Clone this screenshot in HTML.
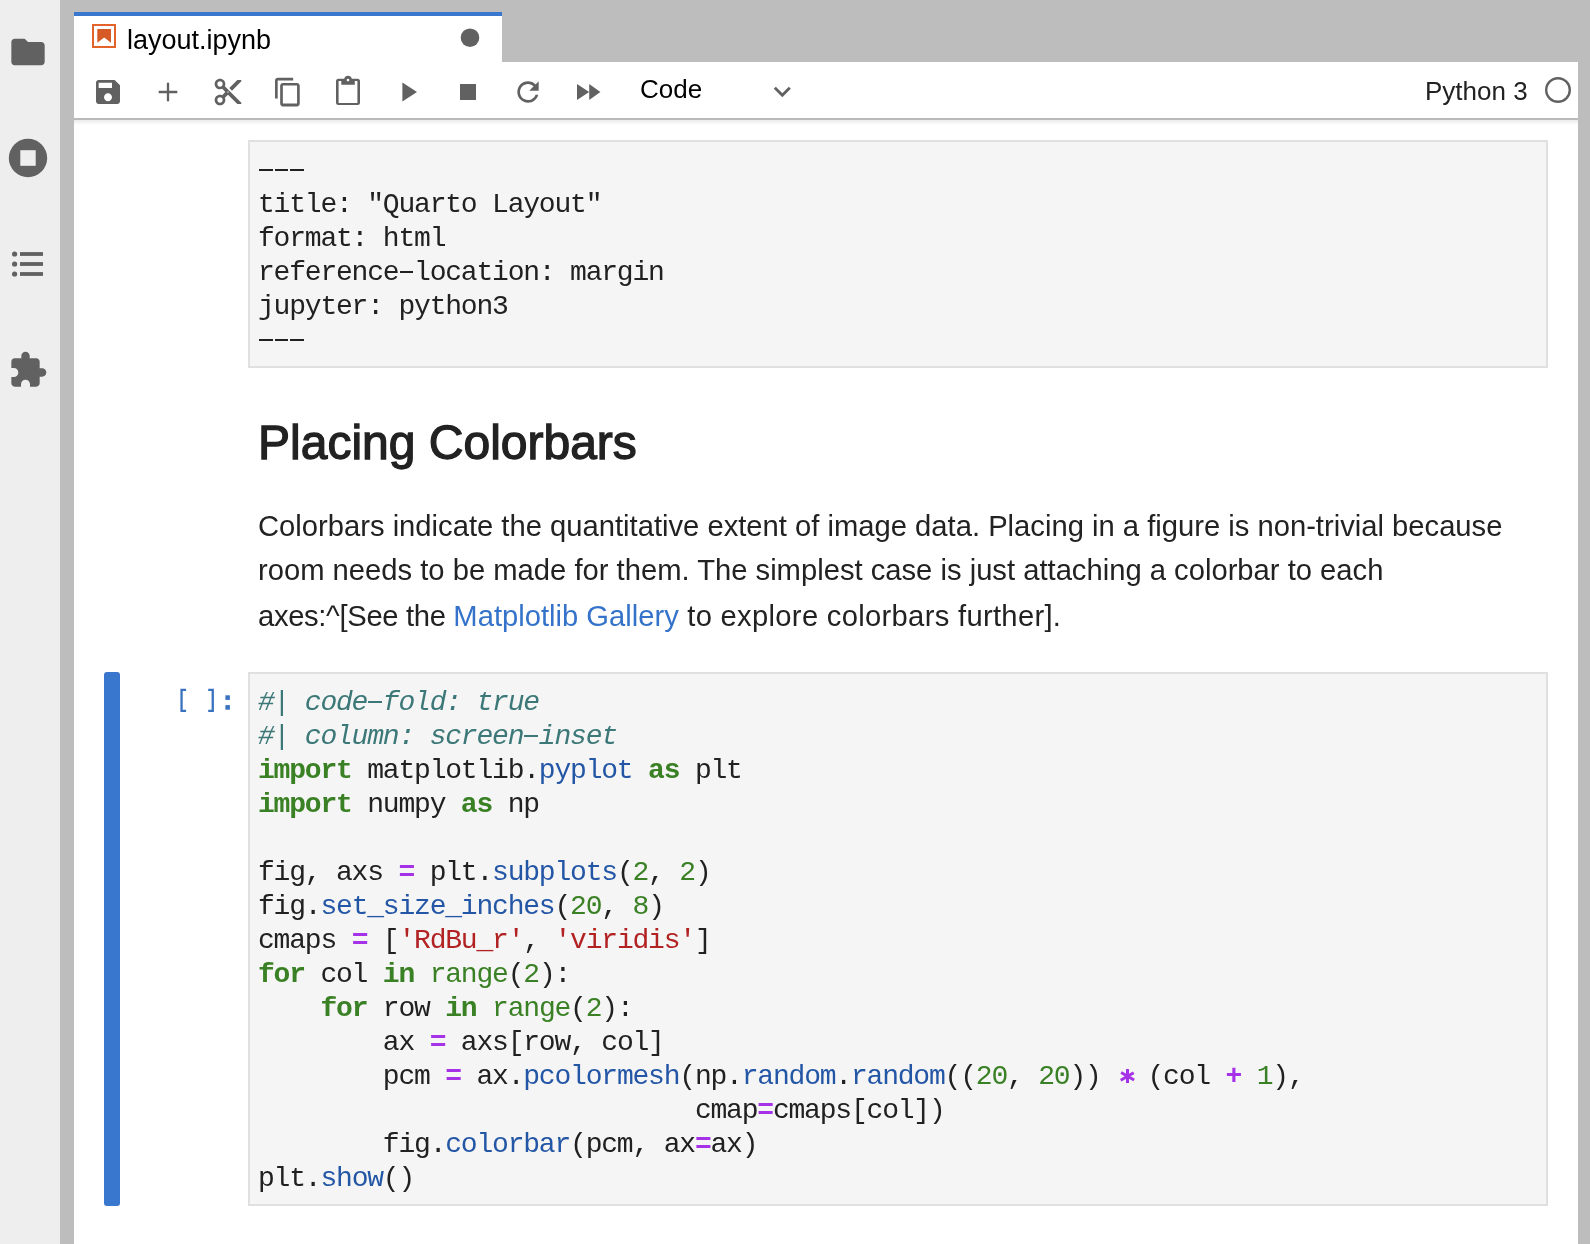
<!DOCTYPE html>
<html><head><meta charset="utf-8">
<style>
*{margin:0;padding:0;box-sizing:border-box}
html,body{width:1590px;height:1244px;overflow:hidden;background:#bdbdbd;font-family:"Liberation Sans",sans-serif;position:relative}
.abs{position:absolute}
body>div{will-change:transform}
#side{left:0;top:0;width:60px;height:1244px;background:#eeeeee}
#main{left:74px;top:62px;width:1504px;height:1182px;background:#fff}
#tab{left:74px;top:12px;width:428px;height:50px;background:#fff;border-top:4px solid #3877cd}
#toolbar{left:74px;top:62px;width:1504px;height:58px;background:#fff;border-bottom:2px solid #bababa}
#tshadow{left:74px;top:120px;width:1504px;height:5px;background:linear-gradient(rgba(0,0,0,0.08),rgba(0,0,0,0))}
.mono{font-family:"Liberation Mono",monospace;font-size:28px;letter-spacing:-1.2px;line-height:34px;white-space:pre;color:#212121}
.cell{background:#f5f5f5;border:2px solid #e0e0e0}
.cm{color:#3d7878;font-style:italic}
.kw{color:#3a8024;font-weight:bold}
.op{color:#a532e6;font-weight:bold}
.fn{color:#2456a6}
.nu{color:#3a8024}
.st{color:#b22222}
.hy{display:inline-block;width:15.6px;height:34px;vertical-align:top;position:relative;letter-spacing:0}
.hy::after{content:"";position:absolute;left:1.2px;width:13.4px;top:14.6px;height:2.6px;background:currentColor}
.ast{display:inline-block;width:15.6px;height:34px;vertical-align:top;position:relative;letter-spacing:0}
.ast i{position:absolute;left:10.2px;top:8.75px;width:2.6px;height:14.5px;background:#a532e6;transform-origin:50% 50%}
.ast i:nth-child(2){transform:rotate(60deg)}
.ast i:nth-child(3){transform:rotate(-60deg)}
svg{position:absolute;left:0;top:0}
</style></head><body>
<div id="side" class="abs"></div>
<div id="main" class="abs"></div>
<div id="tab" class="abs"></div>
<div id="toolbar" class="abs"></div>
<div id="tshadow" class="abs"></div>

<div class="abs" style="left:127px;top:23px;font-size:27px;line-height:34px;color:#000">layout.ipynb</div>
<div class="abs" style="left:640px;top:72px;font-size:26px;line-height:34px;color:#000">Code</div>
<div class="abs" style="left:1425px;top:74px;font-size:26px;line-height:34px;color:#222">Python 3</div>

<svg width="1590" height="1244" viewBox="0 0 1590 1244">
 <g fill="#616161">
  <!-- sidebar -->
  <g transform="translate(8,32) scale(1.6667)"><path d="M10 4H4c-1.1 0-1.99.9-1.99 2L2 18c0 1.1.9 2 2 2h16c1.1 0 2-.9 2-2V8c0-1.1-.9-2-2-2h-8l-2-2z"/></g>
  <circle cx="28" cy="158" r="19.2"/>
  <rect x="20.3" y="150.2" width="15.4" height="15.6" fill="#eeeeee"/>
  <circle cx="14.6" cy="254" r="2.6"/><circle cx="14.6" cy="264" r="2.6"/><circle cx="14.6" cy="274" r="2.6"/><rect x="20" y="252.1" width="23" height="3.8"/><rect x="20" y="262.1" width="23" height="3.8"/><rect x="20" y="272.1" width="23" height="3.8"/>
  <g transform="translate(8,350) scale(1.6667)"><path d="M20.5 11H19V7c0-1.1-.9-2-2-2h-4V3.5C13 2.12 11.880 1 10.5 1S8 2.12 8 3.5V5H4c-1.1 0-1.99.9-1.99 2v3.8H3.5c1.49 0 2.7 1.21 2.7 2.7s-1.21 2.7-2.7 2.7H2V20c0 1.1.9 2 2 2h3.8v-1.5c0-1.49 1.21-2.7 2.7-2.7 1.49 0 2.7 1.21 2.7 2.7V22H17c1.1 0 2-.9 2-2v-4h1.5c1.38 0 2.5-1.12 2.5-2.5S21.88 11 20.5 11z"/></g>
  <!-- toolbar -->
  <g transform="translate(92,76) scale(1.3333)"><path d="M17 3H5c-1.11 0-2 .9-2 2v14c0 1.1.89 2 2 2h14c1.1 0 2-.9 2-2V7l-4-4zm-5 16c-1.66 0-3-1.34-3-3s1.34-3 3-3 3 1.34 3 3-1.34 3-3 3zm3-10H5V5h10v4z"/></g>
  <g transform="translate(152,76) scale(1.3333)"><path d="M19 12.87h-6.13v6.13h-1.74v-6.13H5v-1.74h6.13V5h1.74v6.13H19z"/></g>
  <g transform="translate(212,76) scale(1.3333)"><path d="M9.64 7.64c.23-.5.36-1.05.36-1.64 0-2.21-1.79-4-4-4S2 3.790 2 6s1.79 4 4 4c.59 0 1.14-.13 1.64-.36L10 12l-2.36 2.36C7.14 14.13 6.59 14 6 14c-2.21 0-4 1.79-4 4s1.79 4 4 4 4-1.79 4-4c0-.59-.13-1.14-.36-1.64L12 14l7 7h3v-1L9.64 7.64zM6 8c-1.1 0-2-.89-2-2s.9-2 2-2 2 .89 2 2-.9 2-2 2zm0 12c-1.1 0-2-.89-2-2s.9-2 2-2 2 .89 2 2-.9 2-2 2zm6-7.5c-.28 0-.5-.22-.5-.5s.22-.5.5-.5.5.22.5.5-.22.5-.5.5zM19 3l-6 6 2 2 7-7V3z"/></g>
  <g transform="translate(272,76) scale(1.7778)"><path d="M11.9,1H3.2C2.4,1,1.7,1.7,1.7,2.5v10.2h1.5V2.5h8.7V1z M14.1,3.9h-8c-0.8,0-1.5,0.7-1.5,1.5v10.2c0,0.8,0.7,1.5,1.5,1.5h8 c0.8,0,1.5-0.7,1.5-1.5V5.4C15.5,4.6,14.9,3.9,14.1,3.9z M14.1,15.5h-8V5.4h8V15.5z"/></g>
  <path d="M336 81.3a2.5 2.5 0 0 1 2.5-2.5h5.7a3.9 3.9 0 0 1 7.6 0h5.7a2.5 2.5 0 0 1 2.5 2.5v21.1a2.5 2.5 0 0 1-2.5 2.5h-19a2.5 2.5 0 0 1-2.5-2.5zM338.6 81.1v21.8h18.8v-21.8h-2.6v3.7h-13.5v-3.7zM348 78.7a1.3 1.3 0 1 0 0.001 0z" fill-rule="evenodd"/>
  <path d="M402.4 82.6L417 92L402.4 101.4z"/>
  <rect x="460" y="84" width="16" height="16"/>
  <g transform="translate(512,76) scale(1.3333)"><path d="M17.65 6.35C16.2 4.9 14.21 4 12 4c-4.42 0-7.99 3.58-7.99 8s3.57 8 7.99 8c3.73 0 6.84-2.55 7.73-6h-2.08c-.82 2.33-3.04 4-5.65 4-3.310 0-6-2.69-6-6s2.69-6 6-6c1.66 0 3.14.69 4.22 1.78L13 11h7V4l-2.35 2.35z"/></g>
  <path d="M577 84L589.2 92L577 100zM589.2 84L600.4 92L589.2 100z"/>
  <circle cx="470" cy="37.7" r="9.3"/>
 </g>
 <path d="M774.8 87.8L782.3 95.2L789.8 87.8" fill="none" stroke="#616161" stroke-width="2.9"/>
 <circle cx="1558" cy="90" r="11.8" fill="none" stroke="#616161" stroke-width="2.4"/>
 <!-- notebook icon -->
 <rect x="93" y="25" width="22" height="22" fill="none" stroke="#e3632b" stroke-width="2"/>
 <path d="M97.3 29H111V42.8L104.2 37.5L97.3 42.8z" fill="#d55a25"/>
</svg>

<div class="abs cell" style="left:248px;top:140px;width:1300px;height:228px"></div>
<div class="abs mono" style="left:258px;top:154px"><span class="hy"></span><span class="hy"></span><span class="hy"></span>
title: "Quarto Layout"
format: html
reference<span class="hy"></span>location: margin
jupyter: python3
<span class="hy"></span><span class="hy"></span><span class="hy"></span></div>

<div class="abs" style="left:258px;top:413px;font-size:48px;line-height:60px;color:#222;-webkit-text-stroke:1.3px #222;letter-spacing:0px">Placing Colorbars</div>
<div class="abs" style="left:258px;top:504px;font-size:29.2px;line-height:44px;color:#222;width:1320px;white-space:nowrap">Colorbars indicate the quantitative extent of image data. Placing in a figure is non-trivial because<br>room needs to be made for them. The simplest case is just attaching a colorbar to each</div>
<div class="abs" style="left:258px;top:594px;font-size:29.2px;line-height:44px;color:#222;white-space:nowrap"><span style="letter-spacing:-0.33px">axes:^[See the </span><span style="color:#3473c9">Matplotlib Gallery</span><span style="letter-spacing:0.3px"> to explore colorbars further].</span></div>

<div class="abs" style="left:104px;top:672px;width:16px;height:534px;background:#3877cd;border-radius:3px"></div>
<svg width="1590" height="1244" viewBox="0 0 1590 1244"><g fill="#3a72c0"><path d="M180.4 688.7h5.7v2.3h-3.4v18.7h3.4v2.3h-5.7zM213.9 688.7h-5.7v2.3h3.4v18.7h-3.4v2.3h5.7z"/><rect x="225.4" y="695.3" width="4.5" height="4.6"/><rect x="225.4" y="705.1" width="4.5" height="4.6"/></g></svg>
<div class="abs cell" style="left:248px;top:672px;width:1300px;height:534px"></div>
<div class="abs mono" style="left:258px;top:686px"><span class="cm">#| code<span class="hy"></span>fold: true</span>
<span class="cm">#| column: screen<span class="hy"></span>inset</span>
<span class="kw">import</span> matplotlib.<span class="fn">pyplot</span> <span class="kw">as</span> plt
<span class="kw">import</span> numpy <span class="kw">as</span> np

fig, axs <span class="op">=</span> plt.<span class="fn">subplots</span>(<span class="nu">2</span>, <span class="nu">2</span>)
fig.<span class="fn">set_size_inches</span>(<span class="nu">20</span>, <span class="nu">8</span>)
cmaps <span class="op">=</span> [<span class="st">'RdBu_r'</span>, <span class="st">'viridis'</span>]
<span class="kw">for</span> col <span class="kw">in</span> <span class="nu">range</span>(<span class="nu">2</span>):
    <span class="kw">for</span> row <span class="kw">in</span> <span class="nu">range</span>(<span class="nu">2</span>):
        ax <span class="op">=</span> axs[row, col]
        pcm <span class="op">=</span> ax.<span class="fn">pcolormesh</span>(np.<span class="fn">random</span>.<span class="fn">random</span>((<span class="nu">20</span>, <span class="nu">20</span>)) <span class="ast"><i></i><i></i><i></i></span> (col <span class="op">+</span> <span class="nu">1</span>),
                            cmap<span class="op">=</span>cmaps[col])
        fig.<span class="fn">colorbar</span>(pcm, ax<span class="op">=</span>ax)
plt.<span class="fn">show</span>()</div>
</body></html>
